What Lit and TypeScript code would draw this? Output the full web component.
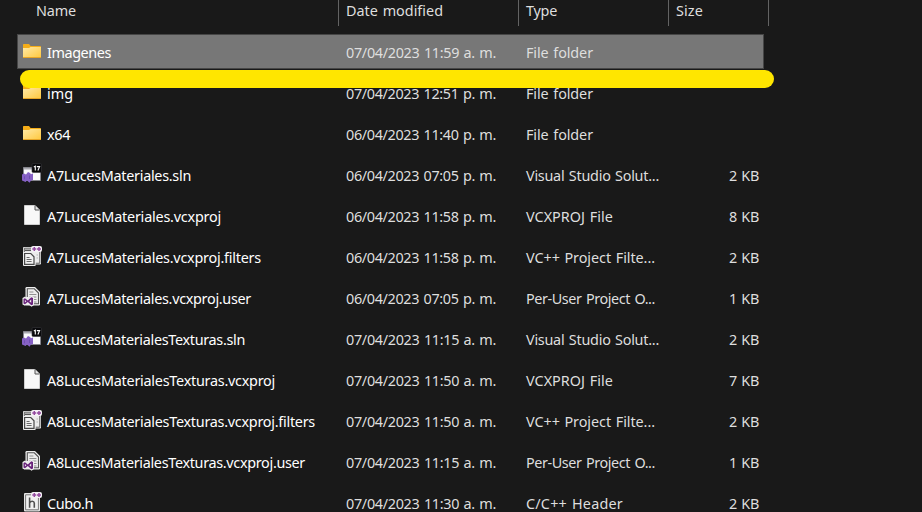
import { LitElement, html, css, svg, nothing } from "lit";
import { customElement, property } from "lit/decorators.js";

type Kind = "folder" | "sln" | "file" | "filters" | "user" | "header";
type Label = [text: string, width: number];
interface Entry { kind: Kind; name: Label; date: string; type: Label; size?: string; }

const FOLDER: Label = ["File folder", 67];
const SLN: Label = ["Visual Studio Solut...", 133];
const PROJ: Label = ["VCXPROJ File", 87];
const FILTERS: Label = ["VC++ Project Filte...", 129];
const USER: Label = ["Per-User Project O...", 129];

const entries: Entry[] = [
  { kind: "folder", name: ["Imagenes", 64], date: "07/04/2023 11:59 a. m.", type: FOLDER },
  { kind: "folder", name: ["img", 26], date: "07/04/2023 12:51 p. m.", type: FOLDER },
  { kind: "folder", name: ["x64", 23], date: "06/04/2023 11:40 p. m.", type: FOLDER },
  { kind: "sln", name: ["A7LucesMateriales.sln", 144], date: "06/04/2023 07:05 p. m.", type: SLN, size: "2 KB" },
  { kind: "file", name: ["A7LucesMateriales.vcxproj", 174], date: "06/04/2023 11:58 p. m.", type: PROJ, size: "8 KB" },
  { kind: "filters", name: ["A7LucesMateriales.vcxproj.filters", 214], date: "06/04/2023 11:58 p. m.", type: FILTERS, size: "2 KB" },
  { kind: "user", name: ["A7LucesMateriales.vcxproj.user", 204], date: "06/04/2023 07:05 p. m.", type: USER, size: "1 KB" },
  { kind: "sln", name: ["A8LucesMaterialesTexturas.sln", 198], date: "07/04/2023 11:15 a. m.", type: SLN, size: "2 KB" },
  { kind: "file", name: ["A8LucesMaterialesTexturas.vcxproj", 228], date: "07/04/2023 11:50 a. m.", type: PROJ, size: "7 KB" },
  { kind: "filters", name: ["A8LucesMaterialesTexturas.vcxproj.filters", 268], date: "07/04/2023 11:50 a. m.", type: FILTERS, size: "2 KB" },
  { kind: "user", name: ["A8LucesMaterialesTexturas.vcxproj.user", 258], date: "07/04/2023 11:15 a. m.", type: USER, size: "1 KB" },
  { kind: "header", name: ["Cubo.h", 46], date: "07/04/2023 11:30 a. m.", type: ["C/C++ Header", 97], size: "2 KB" },
];

const plus = svg`
  <rect x="9" y="0" width="11" height="6" rx="2" fill="#f4f0f5"/>
  <path d="M12.3 1v4M10.3 3h4M17 1v4M15 3h4" stroke="#93499f" stroke-width="1.5"/>`;

const icons = {
  folder: svg`
    <path d="M1 3.7Q1 3 1.7 3H7l1.6 2H18.3q.7 0 .7.7V9H1z" fill="#f5ad18"/>
    <path d="M1 7H7L8.6 6H19V16.3q0 .7-.7.7H1.7q-.7 0-.7-.7z" fill="url(#fold)"/>
    <path d="M1 16.5H19" stroke="#e7a526"/>`,
  sln: svg`
    <path d="M1.5 3.5h17V16.5h-17z" fill="#fafafc" stroke="#85858c"/>
    <path d="M2 4h8v1.5H2z" fill="#a9a9b0"/>
    <path d="M0 10.5L2 9.5 4 10.5 6 8 8 9 9 10.3 11 9.5V16L9 16.6 7.5 18.8 5 16.5 3.5 18 0 16.5z" fill="#8661c5"/>
    <path d="M2.5 12.3v3M7.5 11.5v3.5" stroke="#6e4eae"/>
    <rect x="10" y="-.5" width="9.5" height="9" rx="1.2" fill="#09090b" stroke="#38383d" stroke-width=".6"/>
    <path d="M11.8 2.9L13.3 2.2V6.5M14.8 2.6H17.6L15.9 6.5" fill="none" stroke="#fff" stroke-width="1.1"/>`,
  file: svg`
    <path d="M2.5 .5H13L17.5 5V19.5H2.5z" fill="#f8f8f8" stroke="#cfcfcf"/>
    <path d="M13 .5V5H17.5" fill="#e2e2e2" stroke="#555"/>`,
  filters: svg`
    <rect x="1" y="1" width="18" height="17.5" rx="1" fill="#ececec"/>
    <path d="M2.3 2.2H17.8V17.2H13.5M2.3 2.2V6" fill="none" stroke="#606060" stroke-width="1"/>
    <path d="M3 4.3H9" stroke="#555" stroke-width="1.5"/>
    <path d="M1 6H10.5L13.5 9.5V20H2Q1 20 1 19z" fill="#ececec"/>
    <path d="M2.6 7.5H8.8L12 10.8V18.4H2.6z" fill="#f1f1f1" stroke="#484848" stroke-width="1.2"/>
    <path d="M4.6 11.5h3M4.6 13.5h5M4.6 15.5h5" stroke="#5a5a5a" stroke-width=".9"/>
    <path d="M14.5 9h1.5M14.5 12h1.5" stroke="#b5b5b5"/>
    ${plus}`,
  user: svg`
    <path d="M3.5 1.2Q3.5 0 4.7 0H13L18 5V17.3Q18 18.5 16.8 18.5H3.5z" fill="#eee"/>
    <path d="M5.3 10V1.8H12.3L16.5 6V16.8H11" fill="none" stroke="#555" stroke-width="1.1"/>
    <path d="M7.4 5h4M7.4 7.5h7M7.4 10h7M11.5 12.5h3M11.5 15h3" stroke="#858585" stroke-width=".9"/>
    <path d="M.5 11L3 9.5 5.5 11.8 9.3 8.7 12 10V18L9.5 19.8 5.5 16.5 3 18.7 .5 17.5z" fill="#eee"/>
    <path d="M1.5 12L3 11.2 5.8 13.4 9.3 10.2 11 11V17.5L9.3 18.3 5.8 15 3 17.2 1.5 16.4z" fill="#68217a"/>
    <path d="M2.9 13L4.4 14.2 2.9 15.4zM9.2 12.6V15.8L7.3 14.2z" fill="#eee"/>`,
  header: svg`
    <rect x="2" y="1" width="16" height="18.5" rx="1" fill="#e6e6e6"/>
    <path d="M3.6 2.8H16.4V17.8H3.6z" fill="#f0f0f0" stroke="#777"/>
    <path d="M7.6 5.5V15.8M7.6 10.8Q8.5 9.2 10.3 9.2T12.3 11V15.8" fill="none" stroke="#505050" stroke-width="1.6"/>
    ${plus}`,
};

/** A line of text whose tracking is adjusted to fill a known width. */
@customElement("fit-text")
class FitText extends LitElement {
  @property() text = "";
  @property({ type: Number }) width = 0;
  static styles = css`
    :host { display: block; white-space: pre; word-spacing: 1px; }
    .line { display: inline-block; }
  `;
  async firstUpdated() {
    await document.fonts.ready;
    const line = this.renderRoot.querySelector<HTMLElement>(".line")!;
    const gap = this.width - line.getBoundingClientRect().width;
    line.style.letterSpacing = `${gap / this.text.length}px`;
  }
  render() {
    return html`<span class="line">${this.text}</span>`;
  }
}

@customElement("app-root")
class AppRoot extends LitElement {
  static styles = css`
    :host {
      display: block; position: relative; width: 922px; height: 512px; overflow: hidden;
      background: #191919; color: #dedede;
      font: 14.4px/20px "Noto Sans", "Open Sans", sans-serif;
    }
    .head, .row { display: grid; grid-template-columns: 321px 180px 150px 100px; box-sizing: border-box; }
    .head { height: 26px; margin-left: 18px; width: 751px; }
    .col { border-right: 1px solid #636363; padding: 1px 0 0 7px; }
    .col.first { padding-left: 18px; }
    .list { padding-top: 6px; }
    .row { height: 41px; padding-top: 11px; margin-left: 18px; width: 751px; }
    .row.selected {
      height: 33px; margin-top: 3px; margin-bottom: 5px; padding-top: 8px; width: 745px;
      background: #777; box-shadow: 0 0 0 1px #464646;
    }
    .cell { padding-left: 7px; }
    .cell.name { display: flex; padding-left: 4px; color: #fff; }
    .icon { width: 20px; height: 20px; margin: -2px 5px 0 0; flex: none; overflow: visible; }
    .size { display: flex; justify-content: flex-end; padding-right: 10px; }
    .selected .size { padding: 0; }
    .marker {
      position: absolute; left: 20px; top: 70px; width: 754px; height: 17.5px;
      border-radius: 9px; background: #ffe600;
    }
  `;

  private label([text, width]: Label) {
    return html`<fit-text .text=${text} .width=${width}></fit-text>`;
  }

  private row(entry: Entry, index: number) {
    return html`
      <div class="row ${index === 0 ? "selected" : ""}">
        <div class="cell name">
          <svg class="icon" viewBox="0 0 20 20">
            <defs>
              <linearGradient id="fold" x1="0" y1="0" x2="1" y2="1">
                <stop offset="0" stop-color="#ffe9a6" /><stop offset="1" stop-color="#ffc83d" />
              </linearGradient>
            </defs>
            ${icons[entry.kind]}
          </svg>
          ${this.label(entry.name)}
        </div>
        <div class="cell">${this.label([entry.date, 150])}</div>
        <div class="cell">${this.label(entry.type)}</div>
        <div class="size">${entry.size ? this.label([entry.size, 30]) : nothing}</div>
      </div>`;
  }

  render() {
    return html`
      <div class="head">
        <div class="col first">${this.label(["Name", 40])}</div>
        <div class="col">${this.label(["Date modified", 97])}</div>
        <div class="col">${this.label(["Type", 31])}</div>
        <div class="col">${this.label(["Size", 27])}</div>
      </div>
      <div class="list">${entries.map((entry, index) => this.row(entry, index))}</div>
      <div class="marker"></div>`;
  }
}
